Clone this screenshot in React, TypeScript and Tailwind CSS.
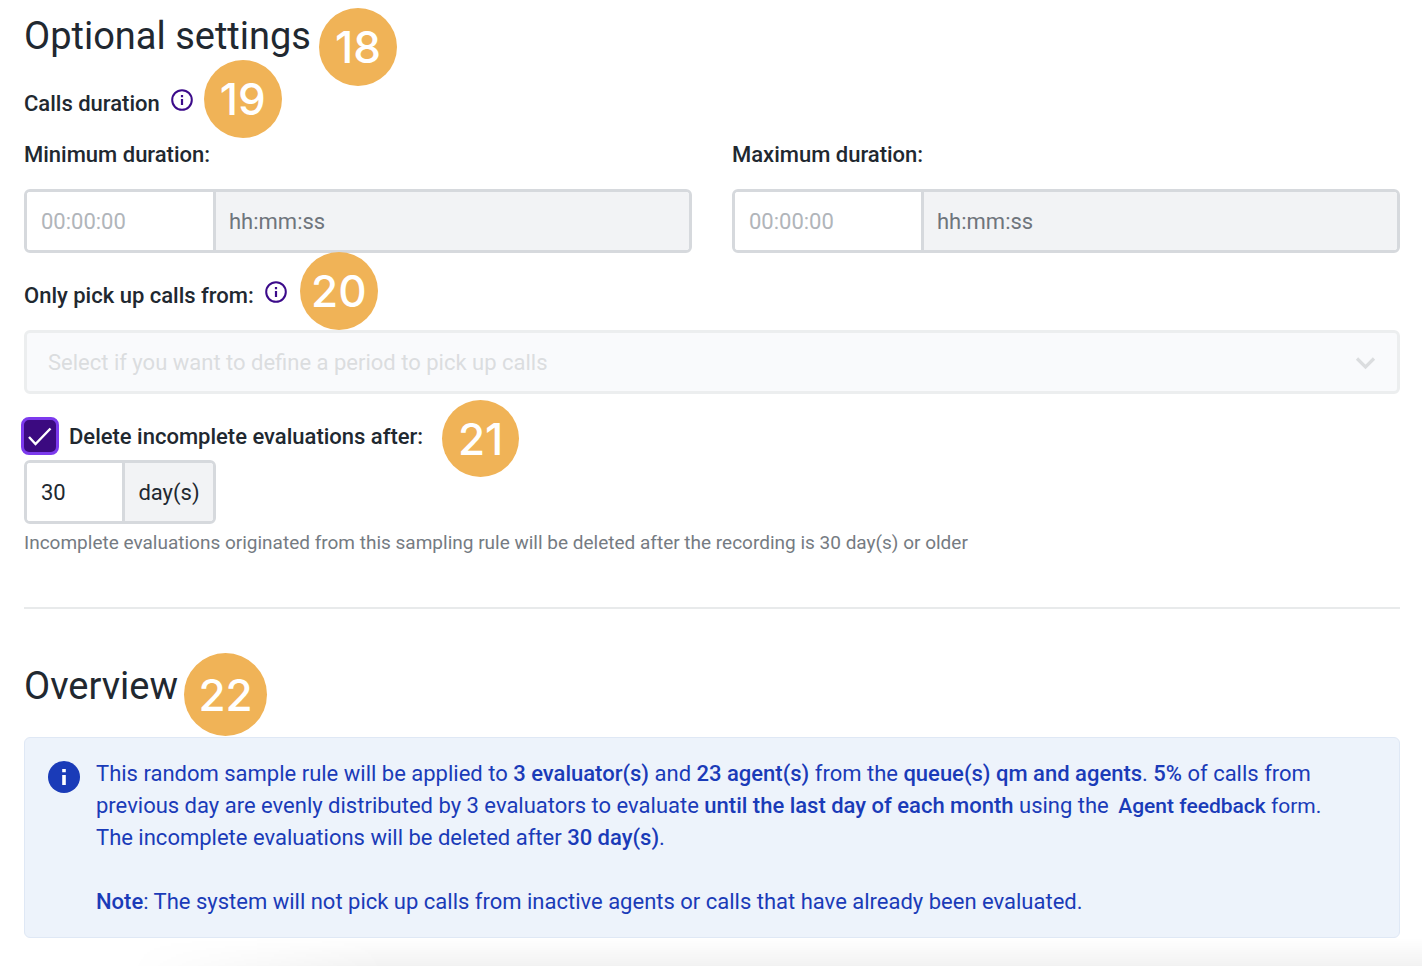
import { useState } from 'react'
import type { ReactNode } from 'react'
import clsx from 'clsx'

function StepBadge({ className, children }: { className: string; children: ReactNode }) {
  return (
    <span
      className={clsx(
        "absolute z-10 flex items-center justify-center rounded-full bg-[#f0b357] font-['Inter',sans-serif] text-[44px] font-medium leading-none text-white",
        className
      )}
    >
      {children}
    </span>
  )
}

function InfoButton({ label }: { label: string }) {
  return (
    <button type="button" aria-label={label} className="mb-2 ml-2.5 text-[#3b0a8a]">
      <svg className="h-6 w-6" viewBox="0 0 24 24" fill="none">
        <circle cx="12" cy="12" r="9.8" stroke="currentColor" strokeWidth="2" />
        <path d="M12 11v6M12 7v2.2" stroke="currentColor" strokeWidth="2.2" />
      </svg>
    </button>
  )
}

function DurationField({ id, label }: { id: string; label: string }) {
  const [value, setValue] = useState('')

  return (
    <div>
      <label htmlFor={id} className="block font-medium">
        {label}
      </label>
      <div className="mt-[18px] flex h-16 overflow-hidden rounded-md border-3 border-[#d6d9dd]">
        <input
          id={id}
          type="text"
          value={value}
          onChange={(e) => setValue(e.target.value)}
          placeholder="00:00:00"
          className="w-[189px] border-r-3 border-[#d6d9dd] bg-white px-3.5 pt-0.5 placeholder:text-[#b1b5ba] focus:outline-none"
        />
        <span className="flex flex-1 items-center bg-[#f2f3f5] px-[13px] pt-0.5 text-[#6f757c]">hh:mm:ss</span>
      </div>
    </div>
  )
}

export default function App() {
  const [deleteIncomplete, setDeleteIncomplete] = useState(true)
  const [days, setDays] = useState('30')

  return (
    <main className="relative min-h-screen overflow-hidden bg-white pt-3 pr-[22px] pl-6 font-['Roboto',sans-serif] text-[22px] leading-8 text-[#212830]">
      {/* Optional settings */}
      <section>
        <h2 className="relative w-fit text-[38px] leading-[48px]">
          Optional settings
          <StepBadge className="-top-1 left-full ml-2 h-[78px] w-[78px]">18</StepBadge>
        </h2>

        <div className="relative mt-7 flex h-8 w-fit items-center font-medium">
          <span>Calls duration</span>
          <InfoButton label="About calls duration" />
          <StepBadge className="-top-7 left-full ml-2.5 h-[78px] w-[78px]">19</StepBadge>
        </div>

        <div className="mt-[19px] grid grid-cols-2 gap-10">
          <DurationField id="min-duration" label="Minimum duration:" />
          <DurationField id="max-duration" label="Maximum duration:" />
        </div>

        <div className="relative mt-[27px] flex h-8 w-fit items-center font-medium">
          <label htmlFor="period">Only pick up calls from:</label>
          <InfoButton label="About the pick up period" />
          <StepBadge className="-top-7 left-full ml-3 h-[78px] w-[78px]">20</StepBadge>
        </div>
        <div className="relative mt-[18px]">
          <select
            id="period"
            disabled
            className="h-16 w-full appearance-none rounded-md border-3 border-[#eceeef] bg-[#f9fafc] px-[21px] pt-0.5 text-[#dbdddf] opacity-100"
          >
            <option>Select if you want to define a period to pick up calls</option>
          </select>
          <svg
            className="pointer-events-none absolute top-5 right-[22px] h-6 w-6 text-[#dbdddf]"
            viewBox="0 0 24 24"
            fill="none"
          >
            <path d="M3 8.5l8.5 8.5L20 8.5" stroke="currentColor" strokeWidth="3.2" />
          </svg>
        </div>

        {/* Retention */}
        <div className="relative mt-[26px] flex h-8 w-fit items-center">
          <div className="relative -ml-[3px] flex">
            <input
              id="delete-incomplete"
              type="checkbox"
              checked={deleteIncomplete}
              onChange={(e) => setDeleteIncomplete(e.target.checked)}
              className="h-[38px] w-[38px] appearance-none rounded-lg border-3 border-[#7c3aed] bg-white checked:bg-[#3b0a80]"
            />
            {deleteIncomplete && (
              <svg
                className="pointer-events-none absolute inset-0 h-[38px] w-[38px] text-white"
                viewBox="0 0 38 38"
                fill="none"
              >
                <path d="M8 20l6.5 7L29.500 11.5" stroke="currentColor" strokeWidth="2.4" />
              </svg>
            )}
          </div>
          <label htmlFor="delete-incomplete" className="ml-2.5 pt-0.5 font-medium">
            Delete incomplete evaluations after:
          </label>
          <StepBadge className="-top-5 left-full ml-[19px] h-[77px] w-[77px]">21</StepBadge>
        </div>
        <div className="mt-2 flex h-16 w-48 overflow-hidden rounded-md border-3 border-[#d6d9dd]">
          <input
            type="text"
            aria-label="Days before deletion"
            value={days}
            onChange={(e) => setDays(e.target.value)}
            className="w-[98px] border-r-3 border-[#d6d9dd] bg-white px-3.5 pt-0.5 focus:outline-none"
          />
          <span className="flex flex-1 items-center justify-center bg-[#f2f3f5] pt-0.5">day(s)</span>
        </div>
        <p className="mt-[3px] text-[19px] text-[#757b82]">
          Incomplete evaluations originated from this sampling rule will be deleted after the recording is {days} day(s)
          or older
        </p>
      </section>

      <hr className="mt-12 border-t-2 border-[#e8eaeb]" />

      {/* Overview */}
      <section className="mt-[53px]">
        <h2 className="relative w-fit text-[38px] leading-[48px]">
          Overview
          <StepBadge className="-top-[9px] left-full ml-1.5 h-[83px] w-[83px]">22</StepBadge>
        </h2>

        <div className="mt-[27px] flex gap-4 rounded-md border border-[#dfe8f5] bg-[#edf3fb] px-[23px] pt-5 pb-[19px] text-[#1a3bb8]">
          <svg className="mt-[3px] h-8 w-8 shrink-0" viewBox="0 0 32 32">
            <circle cx="16" cy="16" r="16" fill="currentColor" />
            <path d="M16 14v10M16 8v3.2" stroke="#fff" strokeWidth="3.6" />
          </svg>
          <div>
            <p>
              This random sample rule will be applied to <b className="font-medium">3 evaluator(s)</b> and{' '}
              <b className="font-medium">23 agent(s)</b> from the{' '}
              <b className="font-medium">queue(s) qm and agents</b>. <b className="font-medium">5%</b> of calls from
              <br />
              previous day are evenly distributed by 3 evaluators to evaluate{' '}
              <b className="font-medium">until the last day of each month</b> using the{' '}
              <span className="ml-1 text-[21px]">
                <b className="font-medium">Agent feedback</b> form.
              </span>
              <br />
              The incomplete evaluations will be deleted after <b className="font-medium">{days} day(s)</b>.
            </p>
            <p className="mt-8">
              <b className="font-medium">Note</b>: The system will not pick up calls from inactive agents or calls that
              have already been evaluated.
            </p>
          </div>
        </div>
      </section>

      {/* Soft shade above the page footer */}
      <div className="pointer-events-none absolute right-0 bottom-0 left-32 h-7 bg-linear-to-t from-black/5 to-transparent mask-l-from-80%" />
    </main>
  )
}
